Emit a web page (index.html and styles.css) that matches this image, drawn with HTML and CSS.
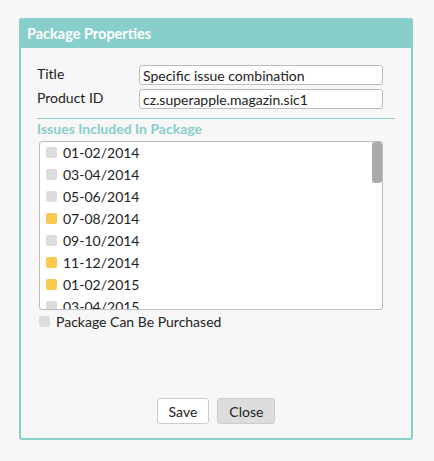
FILE: index.html
```html
<!DOCTYPE html>
<html lang="en">
<head>
    <meta charset="UTF-8">
    <title>Package Properties</title>
    <link rel="stylesheet" href="styles.css">
</head>
<body>

<div class="dialog">
    <div class="dialog-title">Package Properties</div>
    <div class="dialog-body">
        <div class="field">
            <label for="title">Title</label>
            <input type="text" id="title" value="Specific issue combination">
        </div>
        <div class="field">
            <label for="productId">Product ID</label>
            <input type="text" id="productId" value="cz.superapple.magazin.sic1">
        </div>

        <div class="section-title">Issues Included In Package</div>
        <div class="issues-box">
            <div class="issues" id="issues"></div>
            <div class="thumb"></div>
        </div>

        <div class="purchasable">
            <span class="check"></span>
            <span>Package Can Be Purchased</span>
        </div>

        <div class="actions">
            <button class="btn">Save</button>
            <button class="btn btn-close">Close</button>
        </div>
    </div>
</div>

<script>
    // bimonthly issues, the checked ones are in the package
    const issues = ['01-02/2014', '03-04/2014', '05-06/2014', '07-08/2014', '09-10/2014',
                    '11-12/2014', '01-02/2015', '03-04/2015'];
    const checked = ['07-08/2014', '11-12/2014', '01-02/2015'];
    const list = document.getElementById('issues');
    issues.forEach(function (name) {
        const row = document.createElement('div');
        row.className = 'issue';
        const box = document.createElement('span');
        box.className = checked.includes(name) ? 'check on' : 'check';
        const text = document.createElement('span');
        text.textContent = name;
        row.appendChild(box);
        row.appendChild(text);
        list.appendChild(row);
    });
</script>

</body>
</html>
```

FILE: styles.css
```css
body {
    margin: 0;
    padding: 18px 21px 19px 19px;
    background-color: #f7f7f7;
    font-family: Lato, "Open Sans", sans-serif;
    font-size: 14px;
    color: #222;
}
.dialog {
    border: 2px solid #88cecb;
    border-top: none;
    border-radius: 3px;
    background-color: #f7f7f7;
    height: 422px;
    box-sizing: border-box;
    display: flex;
    flex-direction: column;
}
.dialog-title {
    background-color: #88cecb;
    color: white;
    font-weight: bold;
    height: 30px;
    line-height: 31px;
    padding-left: 8px;
    margin: 0 -2px;
    border-radius: 3px 3px 0 0;
    font-size: 14.5px;
}
.dialog-body {
    flex: 1;
    display: flex;
    flex-direction: column;
    padding: 17px 16px 14px 16px;
}
.field {
    display: flex;
    align-items: center;
    margin-bottom: 4px;
}
.field label {
    width: 102px;
    margin-top: -4px;
}
.field input {
    width: 244px;
    height: 20px;
    box-sizing: border-box;
    border: 1px solid #bbb;
    border-radius: 3px;
    background: white;
    font-family: inherit;
    font-size: 14px;
    padding: 0 3px;
    color: #222;
}
.section-title {
    border-top: 1px solid #88cecb;
    margin-top: 5px;
    color: #88cecb;
    font-weight: bold;
    padding-top: 1px;
    line-height: 18px;
}
.issues-box {
    position: relative;
    margin: 3px 12px 0 2px;
    height: 169px;
    box-sizing: border-box;
    border: 1px solid #bbb;
    border-radius: 3px;
    background: white;
    overflow: hidden;
}
.issues {
    margin-top: -1px;
    padding-left: 6px;
}
.thumb {
    position: absolute;
    top: 0;
    right: 0;
    width: 10px;
    height: 41px;
    background-color: #aaa;
    border-radius: 3px;
}
.issue {
    display: flex;
    align-items: center;
    height: 22px;
}
.check {
    width: 11px;
    height: 11px;
    border-radius: 2px;
    background-color: #ddd;
    margin-right: 6px;
}
.check.on {
    background-color: #fcc850;
}
.purchasable {
    display: flex;
    align-items: center;
    margin-top: 3px;
    margin-left: 2px;
}
.actions {
    margin-top: auto;
    display: flex;
    justify-content: center;
    gap: 8px;
}
.btn {
    height: 26px;
    padding: 0 11px;
    border: 1px solid #ccc;
    border-radius: 3px;
    background: white;
    font-family: inherit;
    font-size: 14px;
    color: #222;
}
.btn-close {
    background-color: #ddd;
}
```
